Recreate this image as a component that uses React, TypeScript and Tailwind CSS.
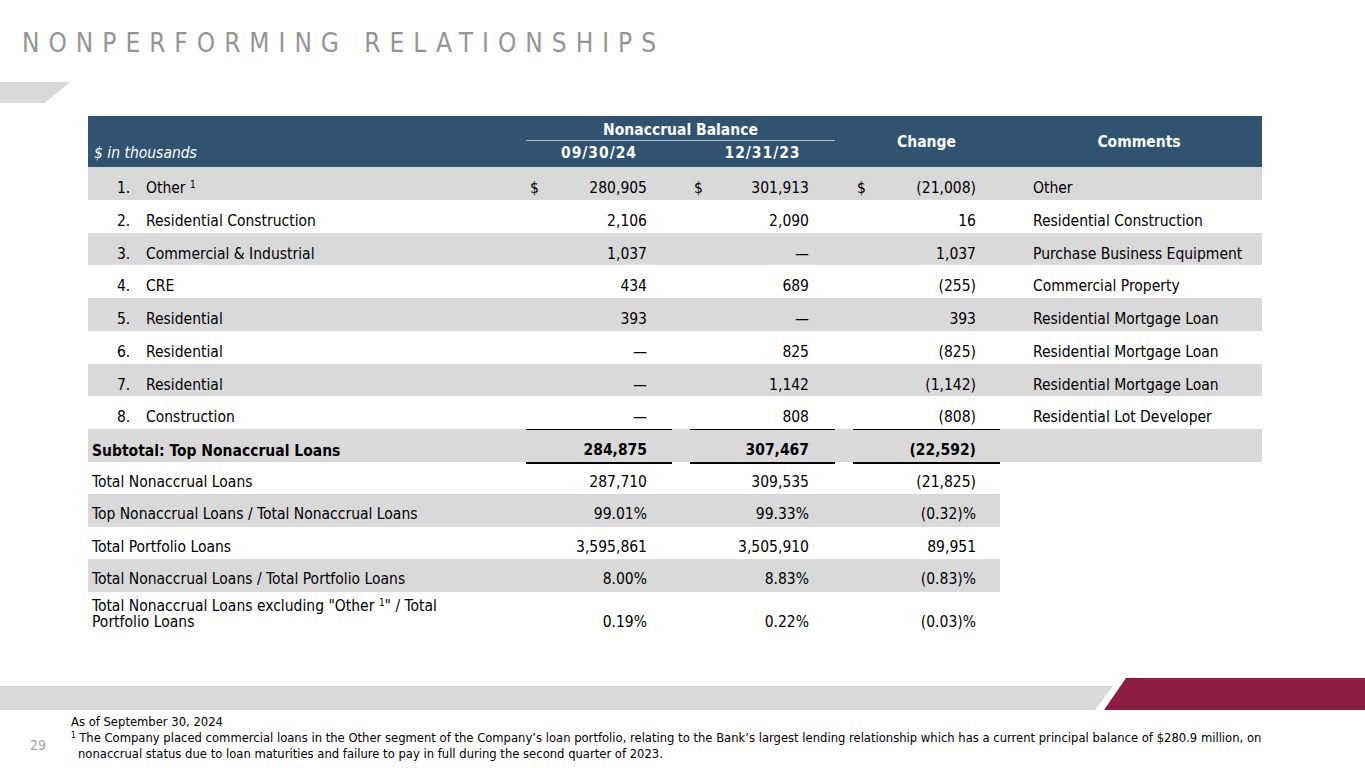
const font = "font-['Tahoma','DejaVu_Sans_Condensed','DejaVu_Sans',sans-serif]";
const cols = 'grid grid-cols-[438px_146px_18px_145px_18px_147px_262px]';

type Row = {
  n?: string;
  label: React.ReactNode;
  a: string;
  b: string;
  c: string;
  comment?: string;
  dollar?: boolean;
};

const top: Row[] = [
  { n: '1.', label: <>Other <sup className="text-[10px]">1</sup></>, a: '280,905', b: '301,913', c: '(21,008)', comment: 'Other', dollar: true },
  { n: '2.', label: 'Residential Construction', a: '2,106', b: '2,090', c: '16', comment: 'Residential Construction' },
  { n: '3.', label: 'Commercial & Industrial', a: '1,037', b: '—', c: '1,037', comment: 'Purchase Business Equipment' },
  { n: '4.', label: 'CRE', a: '434', b: '689', c: '(255)', comment: 'Commercial Property' },
  { n: '5.', label: 'Residential', a: '393', b: '—', c: '393', comment: 'Residential Mortgage Loan' },
  { n: '6.', label: 'Residential', a: '—', b: '825', c: '(825)', comment: 'Residential Mortgage Loan' },
  { n: '7.', label: 'Residential', a: '—', b: '1,142', c: '(1,142)', comment: 'Residential Mortgage Loan' },
  { n: '8.', label: 'Construction', a: '—', b: '808', c: '(808)', comment: 'Residential Lot Developer' },
];

const totals: Row[] = [
  { label: 'Total Nonaccrual Loans', a: '287,710', b: '309,535', c: '(21,825)' },
  { label: 'Top Nonaccrual Loans / Total Nonaccrual Loans', a: '99.01%', b: '99.33%', c: '(0.32)%' },
  { label: 'Total Portfolio Loans', a: '3,595,861', b: '3,505,910', c: '89,951' },
  { label: 'Total Nonaccrual Loans / Total Portfolio Loans', a: '8.00%', b: '8.83%', c: '(0.83)%' },
];

function Num({ v, dollar, pr }: { v: string; dollar?: boolean; pr: string }) {
  return (
    <div className={`flex items-center justify-between pl-1 ${pr}`}>
      <span>{dollar ? '$' : ''}</span>
      <span>{v}</span>
    </div>
  );
}

export default function App() {
  return (
    <div className={`${font} relative flex h-[768px] w-[1365px] flex-col overflow-hidden bg-white text-[15.5px] text-black`}>
      <h1 className="ml-[22px] mt-[28px] text-[26px] leading-[30px] tracking-[0.345em] text-[#959595]">
        NONPERFORMING RELATIONSHIPS
      </h1>
      <div className="mt-[24px] h-[21px] w-[70px] bg-[#d9d9d9] [clip-path:polygon(0_0,100%_0,64%_100%,0_100%)]" />

      <div className="ml-[88px] mt-[13px] w-[1174px]">
        <div className={`${cols} h-[51px] grid-rows-[25px_26px] bg-[#2f5370] font-bold text-white`}>
          <div className="row-span-2 flex items-end pb-[2px] pl-[6px] font-normal italic">$ in thousands</div>
          <div className="col-span-3 col-start-2 flex items-center justify-center border-b border-[#a9bccb] pt-[6px]">
            Nonaccrual Balance
          </div>
          <div className="col-start-6 row-span-2 flex items-center justify-center pt-[3px]">Change</div>
          <div className="col-start-7 row-span-2 flex items-center justify-center pl-4 pt-[3px]">Comments</div>
          <div className="col-start-2 row-start-2 flex items-center justify-center tracking-[0.06em]">09/30/24</div>
          <div className="col-start-4 row-start-2 flex items-center justify-center tracking-[0.06em]">12/31/23</div>
        </div>

        {top.map((r, i) => (
          <div key={i} className={`${cols} h-[32.75px] items-center pt-[10px] ${i % 2 === 0 ? 'bg-[#d9d9d9]' : ''}`}>
            <div className="flex items-center">
              <span className="w-[58px] pl-[29px]">{r.n}</span>
              <span>{r.label}</span>
            </div>
            <Num v={r.a} dollar={r.dollar} pr="pr-[25px]" />
            <div />
            <Num v={r.b} dollar={r.dollar} pr="pr-[26px]" />
            <div />
            <Num v={r.c} dollar={r.dollar} pr="pr-[24px]" />
            <div className="pl-[33px]">{r.comment}</div>
          </div>
        ))}

        <div className={`${cols} h-[32.75px] items-stretch bg-[#d9d9d9] font-bold`}>
          <div className="flex items-center pl-[4px] pt-[10px]">Subtotal: Top Nonaccrual Loans</div>
          <div className="flex items-center justify-end border-t border-b-2 border-black pr-[25px] pt-[9px]">284,875</div>
          <div />
          <div className="flex items-center justify-end border-t border-b-2 border-black pr-[26px] pt-[9px]">307,467</div>
          <div />
          <div className="flex items-center justify-end border-t border-b-2 border-black pr-[24px] pt-[9px]">(22,592)</div>
          <div />
        </div>

        {totals.map((r, i) => (
          <div key={i} className={`${cols} h-[32.5px] items-center`}>
            <div className={`flex h-full items-center pl-[4px] pt-[9px] ${i % 2 === 1 ? 'bg-[#d9d9d9]' : ''}`}>{r.label}</div>
            <div className={`col-span-5 grid h-full grid-cols-[146px_18px_145px_18px_147px] items-center pt-[9px] ${i % 2 === 1 ? 'bg-[#d9d9d9]' : ''}`}>
              <Num v={r.a} pr="pr-[25px]" />
              <div />
              <Num v={r.b} pr="pr-[26px]" />
              <div />
              <Num v={r.c} pr="pr-[24px]" />
            </div>
            <div />
          </div>
        ))}

        <div className={`${cols} h-[40px] items-end pb-[2px] leading-[16px]`}>
          <div className="pl-[4px]">
            Total Nonaccrual Loans excluding "Other <sup className="text-[10px]">1</sup>" / Total
            <br />
            Portfolio Loans
          </div>
          <Num v="0.19%" pr="pr-[25px]" />
          <div />
          <Num v="0.22%" pr="pr-[26px]" />
          <div />
          <Num v="(0.03)%" pr="pr-[24px]" />
          <div />
        </div>
      </div>

      <div className="mt-auto flex h-[32px] items-end">
        <div className="h-[24px] w-[1113px] bg-[#d9d9d9] [clip-path:polygon(0_0,100%_0,calc(100%-18px)_100%,0_100%)]" />
        <div className="-ml-[9px] h-[32px] flex-1 bg-[#8c1d40] [clip-path:polygon(22px_0,100%_0,100%_100%,0_100%)]" />
      </div>
      <div className="flex h-[58px] pt-[4px] text-[12.9px] leading-[16px]">
        <div className="flex w-[71px] items-center pl-[30px] pt-[8px] text-[14px] text-[#a6a6a6]">29</div>
        <div>
          <div>As of September 30, 2024</div>
          <div>
            <sup className="text-[8px]">1</sup> The Company placed commercial loans in the Other segment of the Company’s loan portfolio, relating to the Bank’s largest lending relationship which has a current principal balance of $280.9 million, on
          </div>
          <div className="pl-[7px]">nonaccrual status due to loan maturities and failure to pay in full during the second quarter of 2023.</div>
        </div>
      </div>
    </div>
  );
}
